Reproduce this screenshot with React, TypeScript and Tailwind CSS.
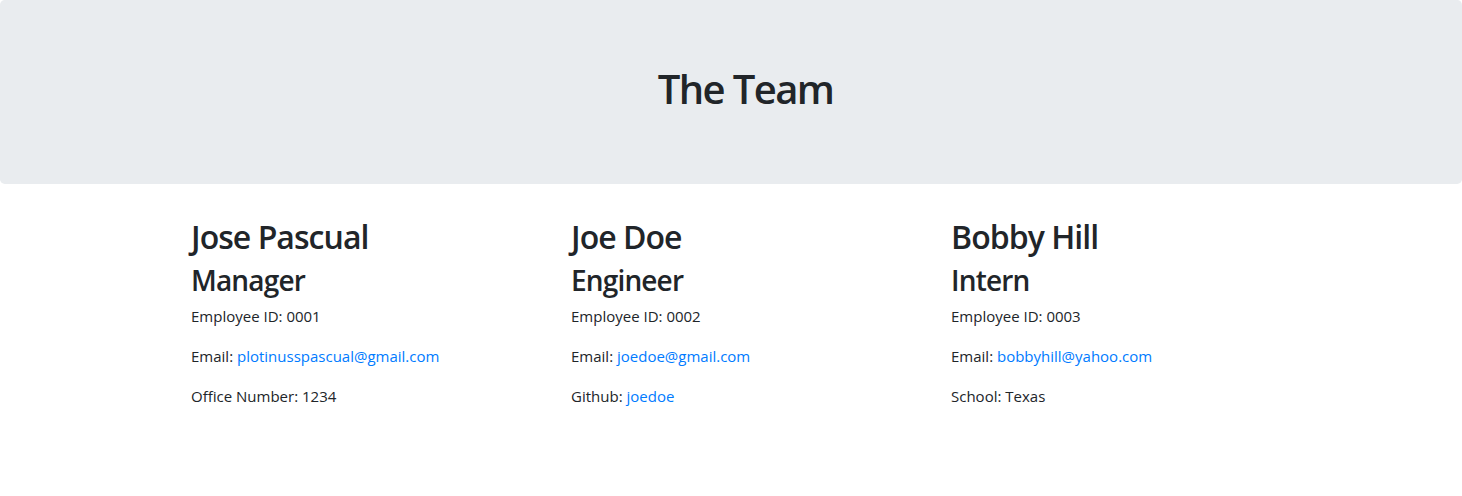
const team = [
  { name: "Jose Pascual", role: "Manager", id: "0001", email: "plotinusspascual@gmail.com", extraLabel: "Office Number", extra: "1234", link: false },
  { name: "Joe Doe", role: "Engineer", id: "0002", email: "joedoe@gmail.com", extraLabel: "Github", extra: "joedoe", link: true },
  { name: "Bobby Hill", role: "Intern", id: "0003", email: "bobbyhill@yahoo.com", extraLabel: "School", extra: "Texas", link: false },
];

export default function App() {
  return (
    <div className="min-h-screen bg-white text-[#212529]" style={{ fontFamily: '"Open Sans", "Noto Sans", sans-serif' }}>
      <div className="bg-[#e9ecef] rounded-[0.3rem] pt-[65px] pb-[63px] mb-8">
        <h1 className="text-center text-[40px] leading-[48px] font-semibold tracking-[-0.04em] mb-2 pl-[29px]">The Team</h1>
      </div>

      <div className="w-[1140px] mx-auto grid grid-cols-3">
        {team.map(emp => (
          <div key={emp.id} className="pl-[30px]">
            <h2 className="text-[32px] leading-[38px] font-semibold tracking-[-0.03em] mt-[2px] mb-[7px]">{emp.name}</h2>
            <h3 className="text-[28px] leading-[34px] font-semibold tracking-[-0.03em] mb-[7px]">{emp.role}</h3>
            <p className="text-[15px] leading-[24px] mb-4">Employee ID: {emp.id}</p>
            <p className="text-[15px] leading-[24px] mb-4">
              Email: <a href="#" className="text-[#007bff]">{emp.email}</a>
            </p>
            <p className="text-[15px] leading-[24px] mb-4">
              {emp.extraLabel}:{" "}
              {emp.link ? <a href="#" className="text-[#007bff]">{emp.extra}</a> : emp.extra}
            </p>
          </div>
        ))}
      </div>
    </div>
  );
}
